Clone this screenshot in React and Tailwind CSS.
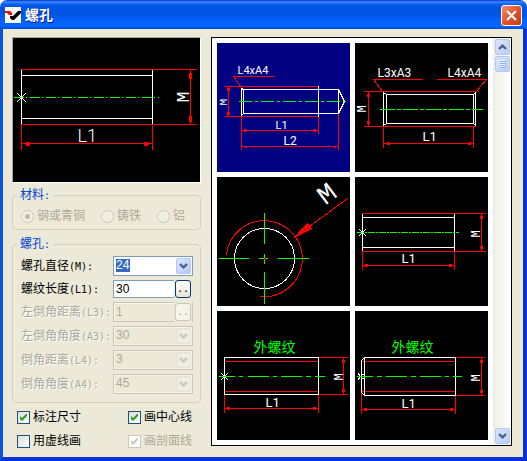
import React, { useState } from 'react';
import clsx from 'clsx';

const RED = '#ff0000';
const GREEN = '#00ff00';
const WHITE = '#ffffff';

/* ---------- drawing helpers ---------- */

const Drawing = ({ width, height, label, children }) => (
  <svg viewBox={`0 0 ${width} ${height}`} className="block w-full h-auto" role="img" aria-label={label}>
    <g transform="translate(0.5 0.5)" fill="none" strokeWidth="1" strokeLinecap="square" shapeRendering="crispEdges">
      {children}
    </g>
  </svg>
);

const Note = ({ x, y, size = 13, children }) => (
  <text
    x={x}
    y={y}
    fontSize={size}
    fill={WHITE}
    className={clsx("font-['Roboto',sans-serif]", size > 14 ? 'font-light' : 'font-normal')}
  >
    {children}
  </text>
);

// diameter letter, turned to read along its dimension line
const Diameter = ({ x, y, size = 13, angle = -90 }) => (
  <text
    transform={`translate(${x} ${y}) rotate(${angle})`}
    fontSize={size}
    fill={WHITE}
    className="font-['Liberation_Sans_Narrow','Liberation_Mono',monospace]"
  >
    M
  </text>
);

// centre line: dashes and gaps alternate, each segment is its own filled bar
const Axis = ({ x1, x2, y, dash }) => {
  let d = '';
  let x = x1;
  for (let i = 0; x < x2; i++) {
    const length = dash[i % dash.length];
    if (i % 2 === 0) d += `M${x} ${y}h${Math.min(length, x2 - x)}v1H${x}Z`;
    x += length;
  }
  return <path d={d} fill={GREEN} transform="translate(-0.5 -0.5)" />;
};

const Ticks = ({ points, size = 3 }) => (
  <g fill={RED} stroke="none">
    {points.map(([x, y]) => (
      <rect key={`${x}-${y}`} x={x - size / 2} y={y - size / 2} width={size} height={size} />
    ))}
  </g>
);

const Cross = ({ x, y, r }) => (
  <path
    d={`M${x - r} ${y - r}L${x + r} ${y + r}M${x - r} ${y + r}L${x + r} ${y - r}`}
    stroke={WHITE}
  />
);

/* ---------- drawings ---------- */

const PreviewDrawing = () => (
  <Drawing width={187} height={144} label="螺孔">
    <path d="M8 37H139M8 80H139M8 31V86M139 31V86" stroke={WHITE} />
    <path d="M8 31H183M8 86H183M177 31V86M8 86V111M139 86V111M8 105H139" stroke={RED} />
    <path d="M176 40V36L177 34L178 36V40ZM176 78V82L177 84L178 82V78ZM11 105L13 104H16V107H13ZM136 105L134 104H131V107H134Z" fill={RED} stroke={RED} />
    <Axis x1={1} x2={146} y={59} dash={[10, 2, 1, 3]} />
    <Cross x={8} y={59} r={4} />
    <Note x={64} y={103} size={18}>L1</Note>
    <Diameter x={175} y={64} size={18} />
  </Drawing>
);

const BlindHole = () => (
  <Drawing width={133} height={129} label="L4xA4">
    <path d="M16 33H57M16 33L24 44M8 43H101M8 73H101M11 43V73M24 73V106M101 73V90M121 71V106M24 87H101M24 103H121" stroke={RED} />
    <path d="M24 45V72M26 46V70M26 46H121V70H26M101 43V73M121 46L127 58L121 70M24 45L26 46M24 72L26 70" stroke={WHITE} />
    <Axis x1={22} x2={131} y={58} dash={[13, 3, 3, 3]} />
    <Ticks points={[[11, 46], [11, 70], [28, 87], [97, 87]]} />
    <Ticks points={[[28, 103], [117, 103]]} size={2} />
    <Note x={20} y={30} size={11}>L4xA4</Note>
    <Note x={58} y={85} size={11}>L1</Note>
    <Note x={66} y={101} size={12}>L2</Note>
    <Diameter x={9} y={62} size={11} />
  </Drawing>
);

const ThroughHole = () => (
  <Drawing width={133} height={129} label="L3xA3 L4xA4">
    <path d="M18 36H67M82 36H131M18 36L27 48M131 36L121 48M9 48H120M9 83H120M13 48V83M28 83V104M118 83V104M28 100H118" stroke={RED} />
    <path d="M28 49V82M31 51V80M118 51V80M120 49V82M31 51H118M31 80H118M28 49L31 51M28 82L31 80M120 49L118 51M120 82L118 80" stroke={WHITE} />
    <Axis x1={25} x2={128} y={66} dash={[15, 2, 4, 2]} />
    <Ticks points={[[13, 52], [13, 79], [33, 100], [114, 100]]} />
    <Note x={22} y={33} size={12}>L3xA3</Note>
    <Note x={92} y={33} size={12}>L4xA4</Note>
    <Note x={67} y={97} size={13}>L1</Note>
    <Diameter x={10} y={69} size={12} />
  </Drawing>
);

const EndView = () => (
  <Drawing width={133} height={129} label="M">
    <circle cx="47" cy="81" r="30" stroke={WHITE} />
    <path d="M9 77A38 38 0 1 1 43 119" stroke={RED} />
    <path d="M47 36V66M47 77V86M47 95V126M2 81H31M42 81H50M61 81H91" stroke={GREEN} />
    <path d="M130 21L77 60" stroke={RED} />
    <path d="M77 60L90 46L94 51Z" fill={RED} stroke={RED} />
    <rect x="46" y="80" width="2" height="2" fill={RED} />
    <Diameter x={108} y={28} size={27} angle={-37} />
  </Drawing>
);

const PlainHole = () => (
  <Drawing width={133} height={129} label="L1">
    <path d="M7 40H99M7 70H99M7 37V73M99 37V73" stroke={WHITE} />
    <path d="M7 36H130M7 74H130M126 36V74M7 74V92M99 74V92M7 88H99" stroke={RED} />
    <Axis x1={2} x2={104} y={55} dash={[7, 1, 2, 1]} />
    <Ticks points={[[126, 40], [126, 70], [11, 88], [95, 88]]} />
    <Cross x={7} y={55} r={3} />
    <Note x={46} y={85} size={13}>L1</Note>
    <Diameter x={124} y={60} size={12} />
  </Drawing>
);

const OuterThreadTitle = () => (
  <text x="36" y="40" fontSize="14" fill={GREEN} className="font-['Noto_Sans_CJK_SC',sans-serif]">
    外螺纹
  </text>
);

const OuterThread = () => (
  <Drawing width={133} height={129} label="外螺纹">
    <path d="M7 50H101M7 80H101M101 46H130M101 83H130M126 46V83M7 83V101M101 83V101M7 97H101" stroke={RED} />
    <path d="M7 46H101V83H7Z" stroke={WHITE} />
    <Ticks points={[[126, 50], [126, 79], [11, 97], [97, 97]]} />
    <Cross x={7} y={65} r={3} />
    <path d="M2 65H17M22 65H25M31 65H51M56 65H59M64 65H84M89 65H93M98 65H107" stroke={GREEN} />
    <OuterThreadTitle />
    <Note x={48} y={95} size={13}>L1</Note>
    <Diameter x={125} y={69} size={12} />
  </Drawing>
);

const OuterThreadChamfer = () => (
  <Drawing width={133} height={129} label="外螺纹">
    <path d="M6 50H100M6 80H100M100 46H129M100 84H129M126 46V84M6 82V102M100 84V102M6 98H100" stroke={RED} />
    <path d="M9 46H100V84H9ZM9 46L6 49V81L9 84" stroke={WHITE} />
    <Ticks points={[[126, 50], [126, 80], [10, 98], [96, 98]]} />
    <path d="M3 62V63H4V67H3V68M6 63H8M6 67H8" stroke={WHITE} />
    <path d="M2 65H17M22 65H26M31 65H51M56 65H60M65 65H85M90 65H93M98 65H106" stroke={GREEN} />
    <OuterThreadTitle />
    <Note x={46} y={96} size={13}>L1</Note>
    <Diameter x={124} y={70} size={12} />
  </Drawing>
);

const holeTypes = [
  { id: 'blind', Figure: BlindHole },
  { id: 'through', Figure: ThroughHole },
  { id: 'end', Figure: EndView },
  { id: 'plain', Figure: PlainHole },
  { id: 'outer', Figure: OuterThread },
  { id: 'outer-chamfer', Figure: OuterThreadChamfer }
];

/* ---------- controls ---------- */

const Chevron = ({ up, className }) => (
  <svg viewBox="0 0 9 6" className={clsx('w-[9px] h-[6px]', up && 'rotate-180', className)} aria-hidden="true">
    <path d="M1 1L4.5 4.3L8 1" fill="none" stroke="currentColor" strokeWidth="2.4" />
  </svg>
);

const FieldLabel = ({ id, text, code, disabled }) => (
  <label
    htmlFor={id}
    className={clsx(
      'w-[92px] shrink-0 whitespace-nowrap',
      disabled ? 'text-[#aca899] [text-shadow:1px_1px_0_#fff]' : 'text-black'
    )}
  >
    {text}
    <span className="font-['DejaVu_Sans_Mono',monospace] text-[10px]">({code}):</span>
  </label>
);

const SelectField = ({ id, text, code, value, disabled, highlighted }) => (
  <div className="flex items-center h-5">
    <FieldLabel id={id} text={text} code={code} disabled={disabled} />
    <div className="relative min-w-0 flex-1 h-5">
      <select
        id={id}
        defaultValue={value}
        disabled={disabled}
        className={clsx(
          "block w-full h-5 appearance-none border pl-[2px] pb-[2px] font-['Liberation_Sans',sans-serif] text-xs leading-4 opacity-100 outline-none",
          disabled
            ? 'border-[#c9c7ba] bg-[#ece9d8] text-[#aca899] shadow-[inset_0_0_0_1px_#f5f3ea]'
            : 'border-[#7f9db9] bg-white',
          highlighted
            ? 'text-white bg-[linear-gradient(#316ac5,#316ac5)] bg-no-repeat bg-[length:14px_13px] bg-[position:2px_2px]'
            : !disabled && 'text-black'
        )}
      >
        <option>{value}</option>
      </select>
      <span
        className={clsx(
          'pointer-events-none absolute right-[2px] top-[2px] flex h-4 w-[15px] items-center justify-center rounded-[2px] border',
          disabled
            ? 'border-[#e4e2d6] bg-[#efede2] text-[#c9c7ba]'
            : 'border-[#b7caf5] bg-linear-to-br from-[#dbe5fe] to-[#b4c9f9] text-[#4d6185]'
        )}
      >
        <Chevron />
      </span>
    </div>
  </div>
);

const LengthField = ({ id, text, code, value, disabled }) => (
  <div className={clsx('flex items-center', disabled ? 'h-5' : 'h-[18px]')}>
    <FieldLabel id={id} text={text} code={code} disabled={disabled} />
    <div
      className={clsx(
        'flex h-full min-w-0 flex-1 items-stretch',
        disabled && 'border-r border-[#c9c7ba]'
      )}
    >
      <input
        id={id}
        type="text"
        defaultValue={value}
        disabled={disabled}
        className={clsx(
          "w-0 min-w-0 flex-1 border border-r-0 pl-[2px] font-['Liberation_Sans',sans-serif] text-xs leading-4 outline-none",
          disabled
            ? 'border-[#c9c7ba] bg-[#ece9d8] text-[#aca899] shadow-[inset_1px_1px_0_0_#f5f3ea]'
            : 'border-[#7f9db9] bg-white text-black'
        )}
      />
      <button
        type="button"
        disabled={disabled}
        aria-label={text}
        className={clsx(
          "ml-px w-4 shrink-0 rounded-[3px] border font-['DejaVu_Sans_Mono',monospace] text-[10px] leading-4",
          disabled
            ? 'my-px mr-px border-[#c9c7ba] bg-[#f5f4ea] text-[#aca899]'
            : 'mr-[2px] border-[#003c74] bg-linear-to-b from-white to-[#e6e3d8] text-black'
        )}
      >
        ..
      </button>
    </div>
  </div>
);

const GroupBox = ({ title, className, children }) => (
  <fieldset className={clsx('min-w-0 rounded-[4px] border border-[#d0d0bf] pl-2 pr-[7px]', className)}>
    <legend className="-ml-1 h-4 px-[3px] leading-4 text-[#0046d5]">
      {title}
      <span className="font-['DejaVu_Sans_Mono',monospace] text-[10px]">:</span>
    </legend>
    {children}
  </fieldset>
);

const Radio = ({ label, checked }) => (
  <label className="flex items-center gap-[3px] text-[#aca899]">
    <input
      type="radio"
      name="material"
      defaultChecked={checked}
      disabled
      className="size-[13px] appearance-none rounded-full border border-[#cac8bb] bg-[#f1efe4] checked:bg-[radial-gradient(circle,#bdbbae_2px,#f1efe4_3px)]"
    />
    {label}
  </label>
);

const Checkbox = ({ label, checked, disabled }) => (
  <label className={clsx('flex h-4 items-center gap-[3px]', disabled ? 'text-[#aca899]' : 'text-black')}>
    <span className="grid size-[13px] place-items-center">
      <input
        type="checkbox"
        defaultChecked={checked}
        disabled={disabled}
        className={clsx(
          'peer col-start-1 row-start-1 size-[13px] appearance-none border',
          disabled ? 'border-[#cac8bb] bg-white' : 'border-[#1c5180] bg-linear-to-br from-[#dcdcd7] to-white'
        )}
      />
      <svg
        viewBox="0 0 7 7"
        className={clsx(
          'pointer-events-none invisible col-start-1 row-start-1 size-[7px] peer-checked:visible',
          disabled ? 'text-[#cac8bb]' : 'text-[#21a121]'
        )}
        aria-hidden="true"
      >
        <path d="M0 2L2 4L7 -1V2L2 7L0 5Z" fill="currentColor" />
      </svg>
    </span>
    {label}
  </label>
);

const TitleBar = () => (
  <header className="flex h-[29px] shrink-0 items-center rounded-t-[7px] bg-[linear-gradient(#0831d9_0,#3b8cf8_2px,#0c62ee_4px,#0054e3_7px,#0054e3_14px,#0461f8_20px,#0366ff_26px,#0048d0_29px)] pl-[5px] pr-[5px]">
    <svg viewBox="0 0 16 16" className="size-4 bg-white" aria-hidden="true">
      <path d="M0 4H5L7 6V8H4L2 6H0Z" fill="#f00" />
      <path d="M5 9H8L13 4H16V6L9 13H7L5 11Z" fill="#000" />
    </svg>
    <h1 className="ml-1 flex-1 text-sm leading-4 font-bold text-white [text-shadow:1px_1px_0_#0a1883]">螺孔</h1>
    <button
      type="button"
      aria-label="关闭"
      className="mt-[2px] flex size-[21px] items-center justify-center rounded-[3px] border border-white bg-linear-to-br from-[#ee8f72] via-[#e2512a] to-[#c63c12]"
    >
      <svg viewBox="0 0 11 11" className="size-[11px]" aria-hidden="true">
        <path d="M1 1L10 10M10 1L1 10" stroke="#fff" strokeWidth="2.2" />
      </svg>
    </button>
  </header>
);

const scrollButton =
  'flex h-4 w-[15px] items-center justify-center rounded-[2px] border border-[#b4c8f6] bg-linear-to-br from-[#dbe5fe] to-[#b9cdfb] text-[#4d6185]';

const ScrollBar = () => (
  <div className="flex w-[18px] shrink-0 flex-col items-center bg-linear-to-r from-[#efede6] to-[#fefefb] py-px">
    <button type="button" aria-label="向上" className={scrollButton}>
      <Chevron up />
    </button>
    <div className={clsx(scrollButton, 'mt-px')}>
      <svg viewBox="0 0 7 8" className="h-2 w-[7px]" aria-hidden="true">
        <path d="M0 0.5H6M0 2.5H6M0 4.5H6M0 6.5H6" stroke="#eef4fe" />
        <path d="M1 1.5H7M1 3.5H7M1 5.5H7M1 7.5H7" stroke="#8cb0f8" />
      </svg>
    </div>
    <button type="button" aria-label="向下" className={clsx(scrollButton, 'mt-auto')}>
      <Chevron />
    </button>
  </div>
);

const App = () => {
  const [selected, setSelected] = useState('blind');

  return (
    <div className="flex min-h-screen flex-col bg-white font-['Liberation_Sans','Noto_Sans_CJK_SC',sans-serif] text-xs leading-4">
      <TitleBar />
      <main className="flex flex-1 items-start gap-[10px] border-r-4 border-b-4 border-l-3 border-[#0831d9] border-l-[#0855dd] bg-[#ece9d8] pt-2 pr-[11px] pb-2 pl-[9px]">
        <div className="w-[189px] shrink-0">
          <div className="border border-[#aca899] border-r-white border-b-white bg-black">
            <PreviewDrawing />
          </div>

          <GroupBox title="材料" className="mt-1 pt-[5px] pb-[5px]">
            <div className="flex gap-4">
              <Radio label="钢或青铜" checked />
              <Radio label="铸铁" />
              <Radio label="铝" />
            </div>
          </GroupBox>

          <GroupBox title="螺孔" className="mt-[6px] pt-1 pb-2">
            <div className="flex flex-col gap-1">
              <SelectField id="diameter" text="螺孔直径" code="M" value="24" highlighted />
              <LengthField id="length" text="螺纹长度" code="L1" value="30" />
              <LengthField id="left-distance" text="左倒角距离" code="L3" value="1" disabled />
              <SelectField id="left-angle" text="左倒角角度" code="A3" value="30" disabled />
              <SelectField id="distance" text="倒角距离" code="L4" value="3" disabled />
              <SelectField id="angle" text="倒角角度" code="A4" value="45" disabled />
            </div>
          </GroupBox>

          <div className="mt-[6px] grid grid-cols-[111px_1fr] gap-y-2 pl-[5px]">
            <Checkbox label="标注尺寸" checked />
            <Checkbox label="画中心线" checked />
            <Checkbox label="用虚线画" />
            <Checkbox label="画剖面线" checked disabled />
          </div>
        </div>

        <section className="flex min-w-0 flex-1 border border-black bg-white">
          <div className="grid min-w-0 flex-1 grid-cols-2 gap-[5px] p-[5px]">
            {holeTypes.map(({ id, Figure }) => (
              <button
                key={id}
                type="button"
                aria-pressed={selected === id}
                onClick={() => setSelected(id)}
                className={selected === id ? 'bg-[#000080]' : 'bg-black'}
              >
                <Figure />
              </button>
            ))}
          </div>
          <ScrollBar />
        </section>
      </main>
    </div>
  );
};

export default App;
